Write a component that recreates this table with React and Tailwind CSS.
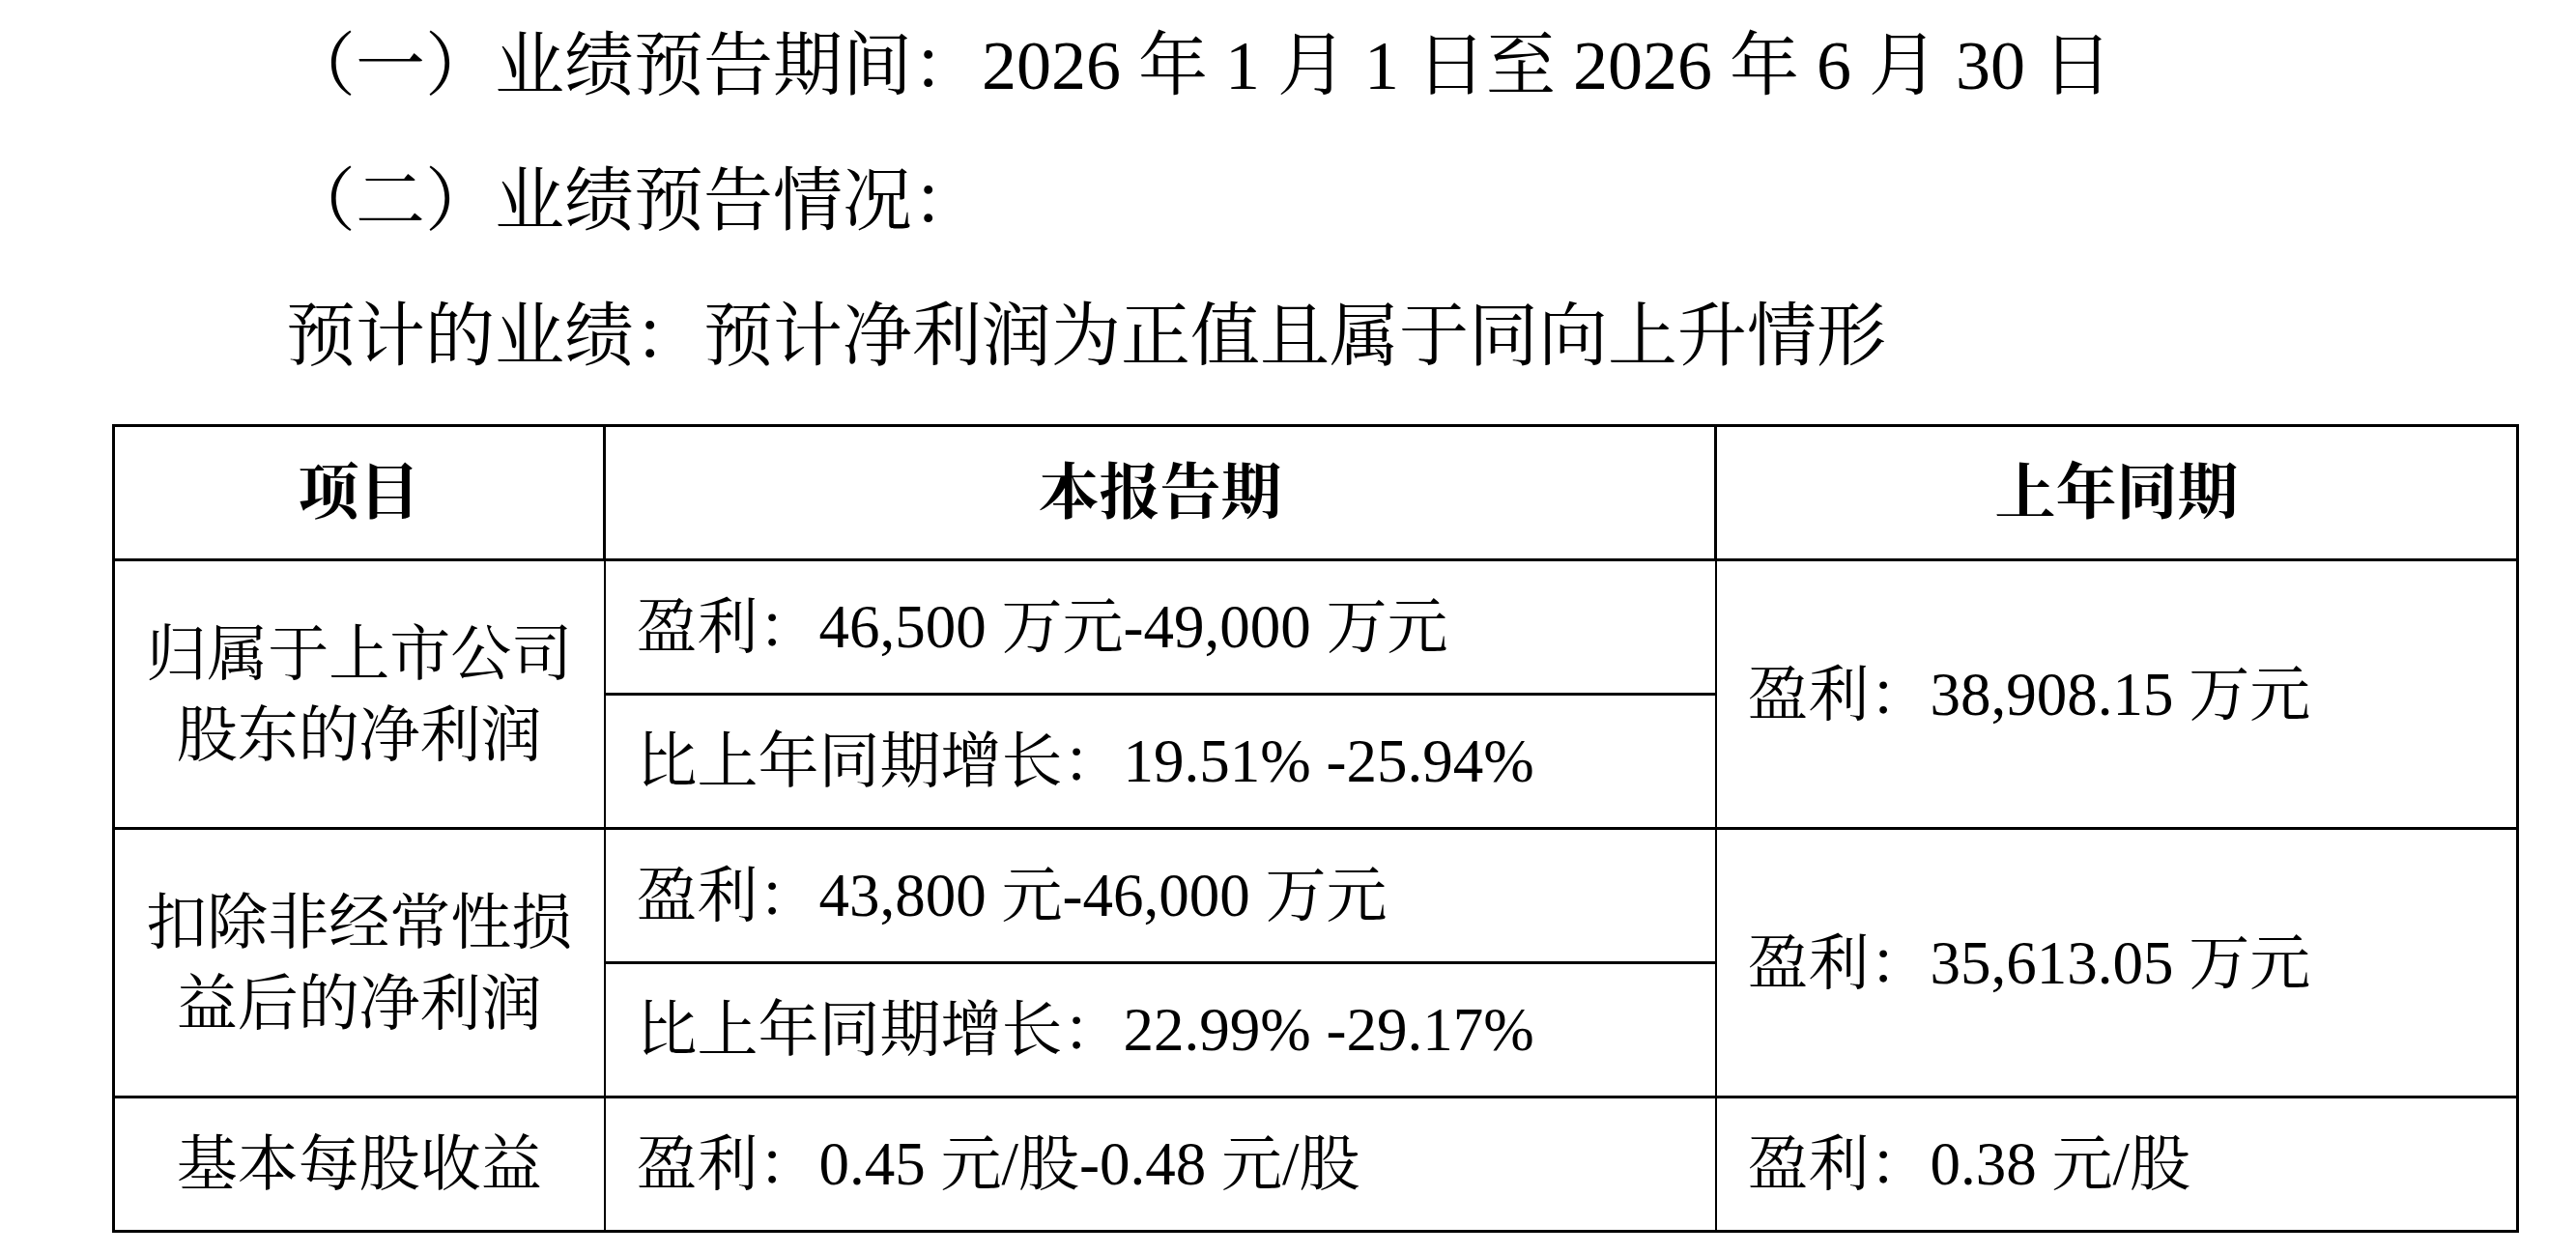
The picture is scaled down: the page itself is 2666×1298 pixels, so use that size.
import React from 'react';

const font = "font-['Liberation_Serif','Noto_Serif_CJK_SC','Noto_Sans_CJK_SC',serif]";

const rows = [
  {
    label: ['归属于上市公司', '股东的净利润'],
    current: ['盈利：46,500 万元-49,000 万元', '比上年同期增长：19.51% -25.94%'],
    last: '盈利：38,908.15 万元',
  },
  {
    label: ['扣除非经常性损', '益后的净利润'],
    current: ['盈利：43,800 元-46,000 万元', '比上年同期增长：22.99% -29.17%'],
    last: '盈利：35,613.05 万元',
  },
];

const App = () => {
  return (
    <div className={`min-h-screen w-full bg-white text-black ${font}`}>
      {/* Paragraphs */}
      <div className="pl-[296px] -mt-[2px] text-[72px] leading-[140px]">
        <p className="whitespace-nowrap">（一）业绩预告期间：2026 年 1 月 1 日至 2026 年 6 月 30 日</p>
        <p className="whitespace-nowrap">（二）业绩预告情况：</p>
        <p className="whitespace-nowrap">预计的业绩：预计净利润为正值且属于同向上升情形</p>
      </div>

      {/* Forecast table */}
      <div className="ml-[116px] mt-[21px] w-[2488px]">
        <table className="w-full table-fixed border-collapse border-[3px] border-black text-[63px] leading-[84px]">
          <colgroup>
            <col className="w-[508px]" />
            <col className="w-[1150px]" />
            <col className="w-[830px]" />
          </colgroup>
          <thead>
            <tr className="h-[139px] font-bold">
              <th className="border-[3px] border-black text-center">项目</th>
              <th className="border-[3px] border-black text-center">本报告期</th>
              <th className="border-[3px] border-black text-center">上年同期</th>
            </tr>
          </thead>
          <tbody>
            {rows.map((row, i) => (
              <React.Fragment key={i}>
                <tr className="h-[139px]">
                  <td rowSpan={2} className="border-x-2 border-y-[3px] border-black text-center">
                    <div>{row.label[0]}</div>
                    <div>{row.label[1]}</div>
                  </td>
                  <td className="border-x-2 border-y-[3px] border-black pl-[32px] whitespace-nowrap">
                    {row.current[0]}
                  </td>
                  <td rowSpan={2} className="border-x-2 border-y-[3px] border-black pl-[32px] whitespace-nowrap">
                    {row.last}
                  </td>
                </tr>
                <tr className="h-[139px]">
                  <td className="border-x-2 border-y-[3px] border-black pl-[32px] whitespace-nowrap">
                    {row.current[1]}
                  </td>
                </tr>
              </React.Fragment>
            ))}
            <tr className="h-[139px]">
              <td className="border-x-2 border-y-[3px] border-black text-center">基本每股收益</td>
              <td className="border-x-2 border-y-[3px] border-black pl-[32px] whitespace-nowrap">
                盈利：0.45 元/股-0.48 元/股
              </td>
              <td className="border-x-2 border-y-[3px] border-black pl-[32px] whitespace-nowrap">
                盈利：0.38 元/股
              </td>
            </tr>
          </tbody>
        </table>
      </div>
    </div>
  );
};

export default App;
